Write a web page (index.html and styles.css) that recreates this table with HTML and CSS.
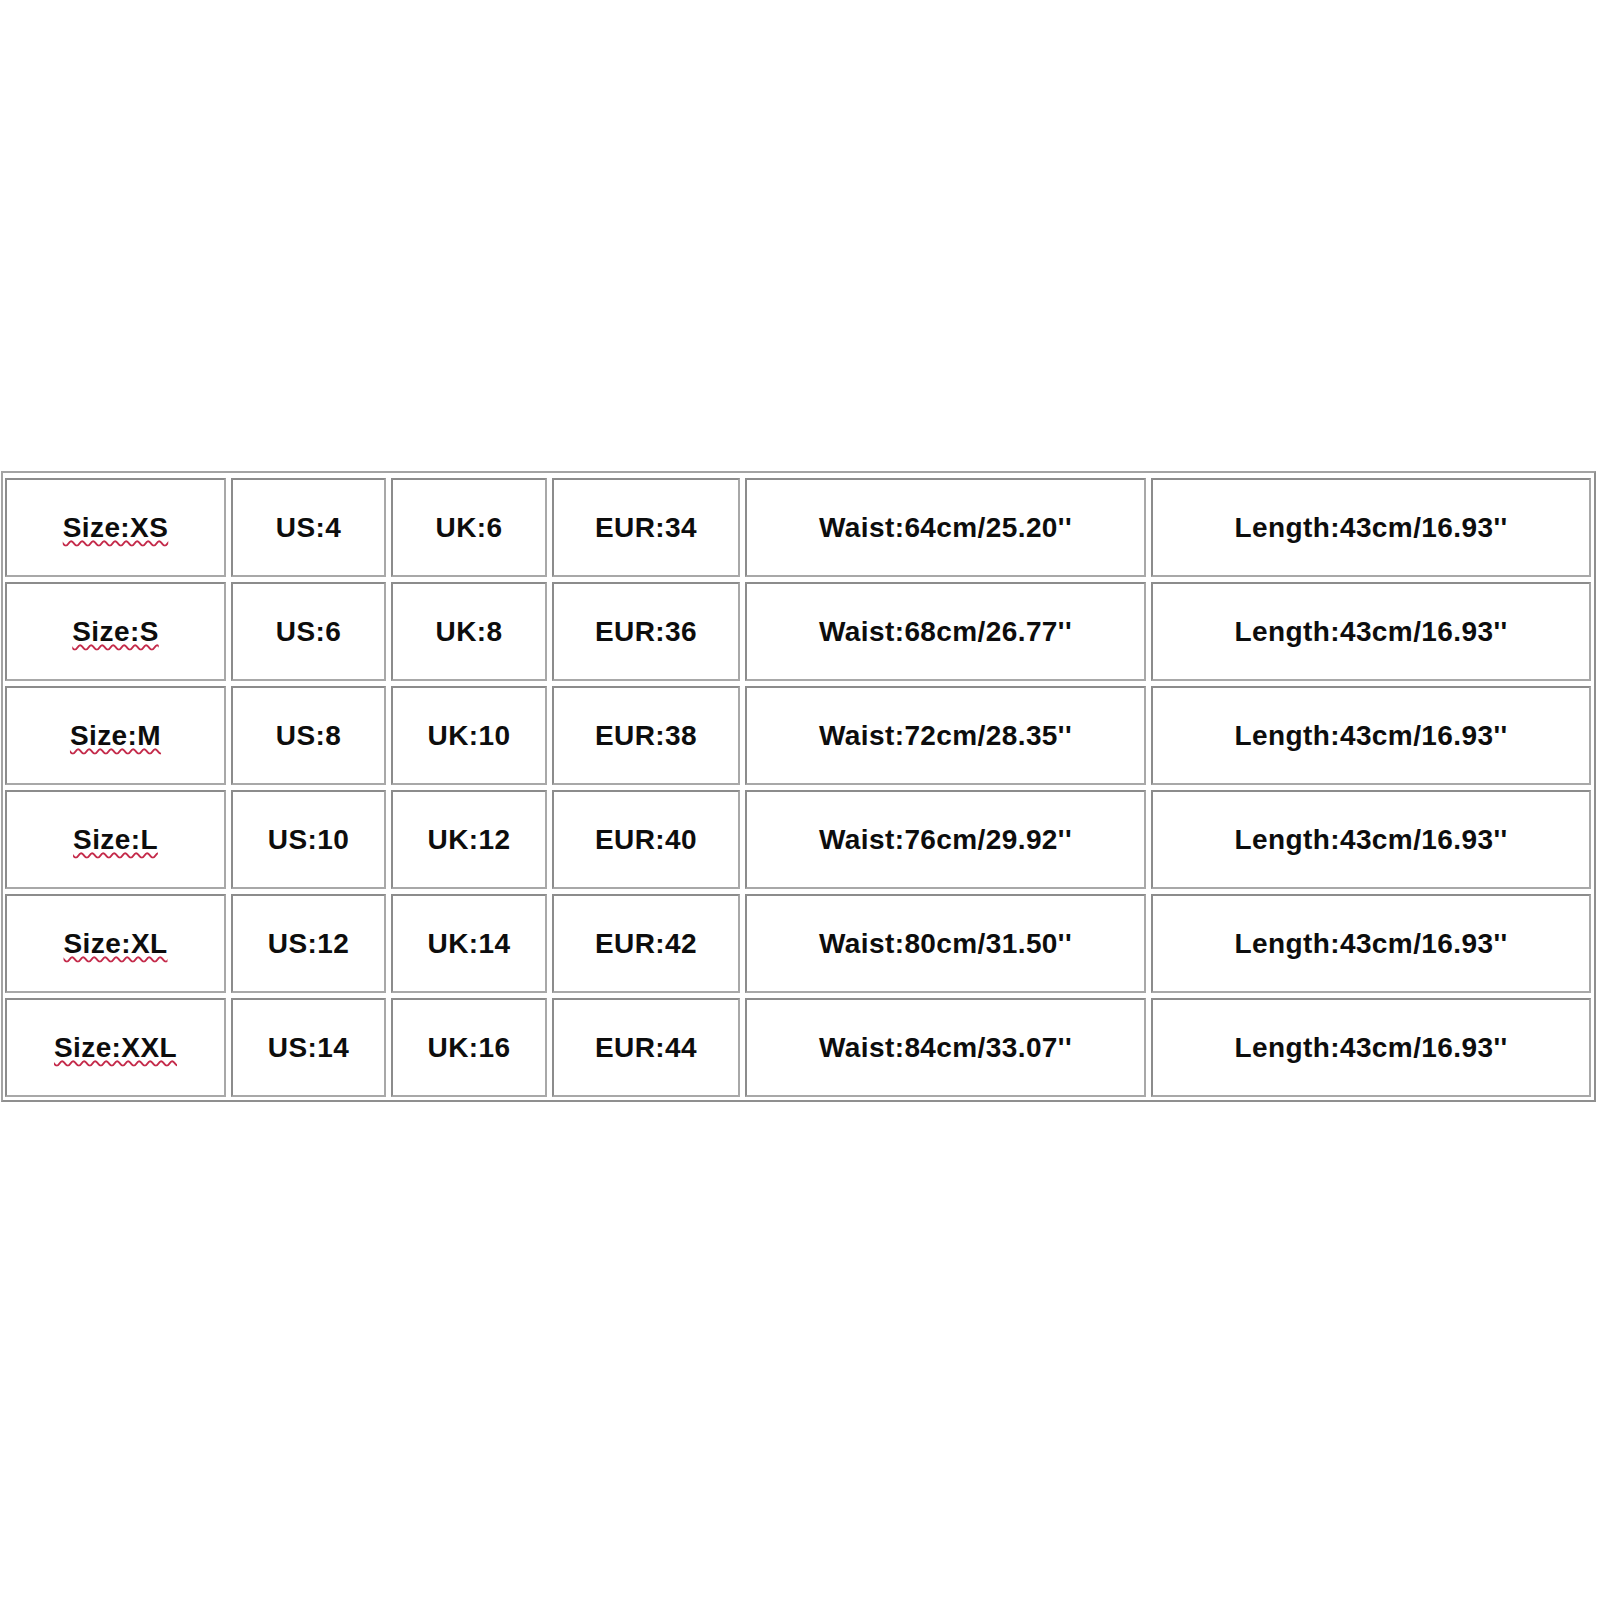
FILE: index.html
```html
<!DOCTYPE html>
<html>
<head>
<meta charset="utf-8">
<link rel="stylesheet" href="styles.css">
</head>
<body>
<div class="chart">
  <div class="cell"><span class="sz">Size:XS</span></div>
  <div class="cell">US:4</div>
  <div class="cell">UK:6</div>
  <div class="cell">EUR:34</div>
  <div class="cell">Waist:64cm/25.20''</div>
  <div class="cell">Length:43cm/16.93''</div>

  <div class="cell"><span class="sz">Size:S</span></div>
  <div class="cell">US:6</div>
  <div class="cell">UK:8</div>
  <div class="cell">EUR:36</div>
  <div class="cell">Waist:68cm/26.77''</div>
  <div class="cell">Length:43cm/16.93''</div>

  <div class="cell"><span class="sz">Size:M</span></div>
  <div class="cell">US:8</div>
  <div class="cell">UK:10</div>
  <div class="cell">EUR:38</div>
  <div class="cell">Waist:72cm/28.35''</div>
  <div class="cell">Length:43cm/16.93''</div>

  <div class="cell"><span class="sz">Size:L</span></div>
  <div class="cell">US:10</div>
  <div class="cell">UK:12</div>
  <div class="cell">EUR:40</div>
  <div class="cell">Waist:76cm/29.92''</div>
  <div class="cell">Length:43cm/16.93''</div>

  <div class="cell"><span class="sz">Size:XL</span></div>
  <div class="cell">US:12</div>
  <div class="cell">UK:14</div>
  <div class="cell">EUR:42</div>
  <div class="cell">Waist:80cm/31.50''</div>
  <div class="cell">Length:43cm/16.93''</div>

  <div class="cell"><span class="sz">Size:XXL</span></div>
  <div class="cell">US:14</div>
  <div class="cell">UK:16</div>
  <div class="cell">EUR:44</div>
  <div class="cell">Waist:84cm/33.07''</div>
  <div class="cell">Length:43cm/16.93''</div>
</div>
</body>
</html>
```
FILE: styles.css
```css
html, body {
  margin: 0;
  padding: 0;
  background: #ffffff;
}

body {
  font-family: "Liberation Sans", Arial, sans-serif;
}

.chart {
  display: grid;
  grid-template-columns: 221px 155px 156px 188px 401px 440px;
  grid-auto-rows: 99px;
  gap: 5px;
  width: max-content;
  margin: 471px 0 0 1px;
  padding: 5px 3px 3px 2px;
  border: 2px solid #a3a3a3;
  border-right-color: #8f8f8f;
  border-bottom-color: #8f8f8f;
}

.cell {
  box-sizing: border-box;
  display: flex;
  align-items: center;
  justify-content: center;
  border: 2px solid #8c8c8c;
  border-right-color: #a8a8a8;
  border-bottom-color: #a8a8a8;
  font-size: 28px;
  font-weight: bold;
  letter-spacing: 0.4px;
  color: #0d0d0d;
  white-space: nowrap;
}

.sz {
  text-decoration: underline wavy #c42a4a;
  text-decoration-thickness: 1.5px;
  text-underline-offset: 3px;
}
```
